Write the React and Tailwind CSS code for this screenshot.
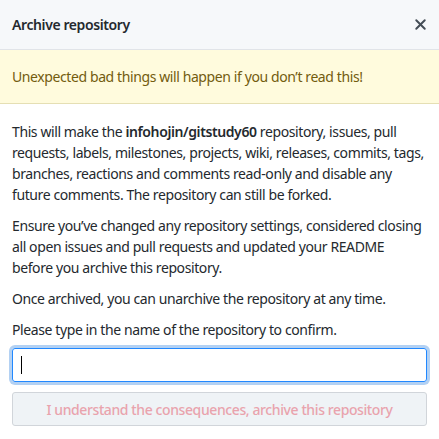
import { X } from "lucide-react";

const App = () => {
  return (
    <div
      className="w-[439px] h-[439px] bg-white text-[14px] text-[#24292e] overflow-hidden tracking-[-0.4px]"
      style={{ fontFamily: "'Noto Sans', 'Open Sans', sans-serif" }}
    >
      <div className="h-[50px] flex items-center justify-between px-3 bg-[#f6f8fa] border-b border-[#e1e4e8]">
        <h3 className="font-semibold text-[14px]">Archive repository</h3>
        <button className="text-[#444d56] -mr-[2px]">
          <X size={17} strokeWidth={2.75} />
        </button>
      </div>
      <div className="h-[54px] flex items-center px-3 bg-[#fffbdd] text-[#735c0f] border-b border-[#e5dfb4]">
        Unexpected bad things will happen if you don’t read this!
      </div>
      <div className="px-3 pt-[17px] leading-[21px]">
        <p className="whitespace-nowrap">
          This will make the <strong className="font-semibold">infohojin/gitstudy60</strong> repository, issues, pull
          <br />
          requests, labels, milestones, projects, wiki, releases, commits, tags,
          <br />
          branches, reactions and comments read-only and disable any
          <br />
          future comments. The repository can still be forked.
        </p>
        <p className="mt-[10px] whitespace-nowrap">
          Ensure you’ve changed any repository settings, considered closing
          <br />
          all open issues and pull requests and updated your README
          <br />
          before you archive this repository.
        </p>
        <p className="mt-[10px]">Once archived, you can unarchive the repository at any time.</p>
        <p className="mt-[10px]">Please type in the name of the repository to confirm.</p>
        <div className="relative mt-[8px]">
          <input className="w-full h-[34px] px-2 rounded-[3px] border border-[#2188ff] outline-none caret-transparent shadow-[0_0_0_3px_rgba(3,102,214,0.3)]" />
          <span className="absolute left-[9px] top-[8px] w-[1px] h-[18px] bg-black" />
        </div>
        <button
          disabled
          className="mt-[10px] w-full h-[34px] rounded-[3px] border border-[#d1d5da] bg-[#eff3f6] text-[#e9a3ad] font-medium"
        >
          I understand the consequences, archive this repository
        </button>
      </div>
    </div>
  );
};

export default App;
